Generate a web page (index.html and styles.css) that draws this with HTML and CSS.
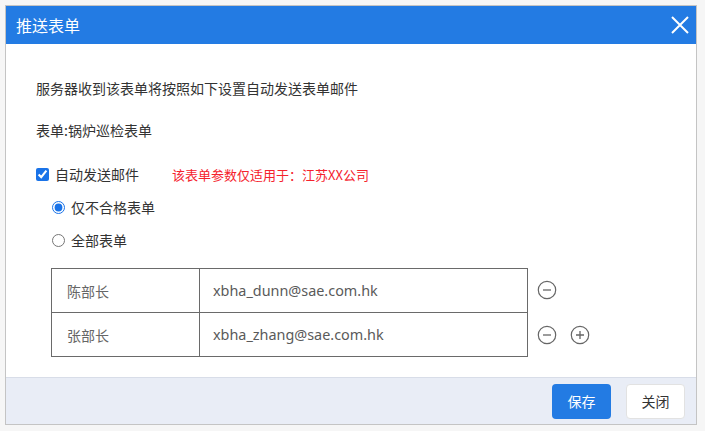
FILE: index.html
```html
<!DOCTYPE html>
<html lang="zh-CN">

<head>
    <meta charset="utf-8">
    <meta name="viewport" content="width=device-width, initial-scale=1.0">
    <title>推送表单</title>
    <link rel="stylesheet" href="styles.css">
</head>

<body>
    <div class="dialog">
        <div class="dialog-head">
            <span class="dialog-title">推送表单</span>
            <svg class="close-x" width="18" height="18" viewBox="0 0 18 18">
                <path d="M1 1 L17 17 M17 1 L1 17" stroke="#fff" stroke-width="2" fill="none" />
            </svg>
        </div>

        <div class="dialog-body">
            <p class="line">服务器收到该表单将按照如下设置自动发送表单邮件</p>
            <p class="line form-name">表单:锅炉巡检表单</p>

            <div class="check-row">
                <label class="opt"><input type="checkbox" checked> 自动发送邮件</label>
                <span class="warn">该表单参数仅适用于：江苏XX公司</span>
            </div>
            <div class="radio-row">
                <label class="opt"><input type="radio" name="scope" checked> 仅不合格表单</label>
            </div>
            <div class="radio-row">
                <label class="opt"><input type="radio" name="scope"> 全部表单</label>
            </div>

            <div class="mail-list">
                <div class="mail-row">
                    <div class="mail-table">
                        <div class="cell name">陈部长</div>
                        <div class="cell mail">xbha_dunn@sae.com.hk</div>
                    </div>
                    <div class="ops">
                        <svg class="op" width="20" height="20" viewBox="0 0 20 20">
                            <circle cx="10" cy="10" r="8.7" stroke="#666" stroke-width="1.2" fill="none" />
                            <path d="M6 10 H14" stroke="#666" stroke-width="1.3" />
                        </svg>
                    </div>
                </div>
                <div class="mail-row">
                    <div class="mail-table last">
                        <div class="cell name">张部长</div>
                        <div class="cell mail">xbha_zhang@sae.com.hk</div>
                    </div>
                    <div class="ops">
                        <svg class="op" width="20" height="20" viewBox="0 0 20 20">
                            <circle cx="10" cy="10" r="8.7" stroke="#666" stroke-width="1.2" fill="none" />
                            <path d="M6 10 H14" stroke="#666" stroke-width="1.3" />
                        </svg>
                        <svg class="op" width="20" height="20" viewBox="0 0 20 20">
                            <circle cx="10" cy="10" r="8.7" stroke="#666" stroke-width="1.2" fill="none" />
                            <path d="M6 10 H14 M10 6 V14" stroke="#666" stroke-width="1.3" />
                        </svg>
                    </div>
                </div>
            </div>
        </div>

        <div class="dialog-foot">
            <button class="btn btn-save">保存</button>
            <button class="btn btn-close">关闭</button>
        </div>
    </div>
</body>

</html>
```

FILE: styles.css
```css
body {
    margin: 0;
    padding: 5px 0 0 5px;
    background-color: #f6f6f6;
    font-family: "Noto Sans CJK SC", "Noto Sans", sans-serif;
    color: #333;
}

.dialog {
    width: 690px;
    height: 418px;
    border: 1px solid #c4c4c4;
    background-color: #fff;
    display: flex;
    flex-direction: column;
}

.dialog-head {
    height: 38px;
    background-color: #237be3;
    display: flex;
    align-items: center;
    justify-content: space-between;
    padding: 0 7px 0 10px;
}

.dialog-title {
    color: #fff;
    font-size: 16px;
}

.dialog-body {
    flex: 1;
    padding: 34px 0 0 30px;
    font-size: 14px;
}

.line {
    margin: 0;
    line-height: 20px;
}

.form-name {
    margin-top: 22px;
}

.check-row {
    margin-top: 24px;
    height: 20px;
    display: flex;
    align-items: center;
}

.opt {
    display: flex;
    align-items: center;
    gap: 6px;
}

.opt input {
    margin: 0;
    width: 13px;
    height: 13px;
    accent-color: #1a73e8;
}

.warn {
    color: #f5222d;
    font-size: 13px;
    margin-left: 33px;
}

.radio-row {
    margin-top: 13px;
    height: 20px;
    display: flex;
    align-items: center;
    padding-left: 16px;
}

.mail-list {
    margin: 18px 0 0 15px;
}

.mail-row {
    display: flex;
    align-items: center;
}

.mail-table {
    display: flex;
    width: 475px;
    height: 43px;
    border: 1px solid #6a6a6a;
    border-bottom: none;
}

.mail-table.last {
    border-bottom: 1px solid #6a6a6a;
}

.cell {
    display: flex;
    align-items: center;
}

.name {
    width: 132px;
    padding-left: 15px;
    border-right: 1px solid #6a6a6a;
    color: #666;
}

.mail {
    padding-left: 13px;
    font-family: "Noto Sans", "Open Sans", sans-serif;
    font-size: 14.4px;
    color: #5a5a5a;
}

.ops {
    display: flex;
    gap: 13px;
    margin-left: 9px;
}

.dialog-foot {
    height: 46px;
    background-color: #e9edf6;
    border-top: 1px solid #d8dde8;
    display: flex;
    justify-content: flex-end;
    align-items: center;
    gap: 15px;
    padding-right: 11px;
}

.btn {
    height: 35px;
    width: 59px;
    border-radius: 4px;
    font-family: "Noto Sans CJK SC", sans-serif;
    font-size: 14px;
    cursor: pointer;
}

.btn-save {
    background-color: #237be3;
    border: none;
    color: #fff;
}

.btn-close {
    background-color: #fff;
    border: 1px solid #e2e2e2;
    color: #333;
}
```
